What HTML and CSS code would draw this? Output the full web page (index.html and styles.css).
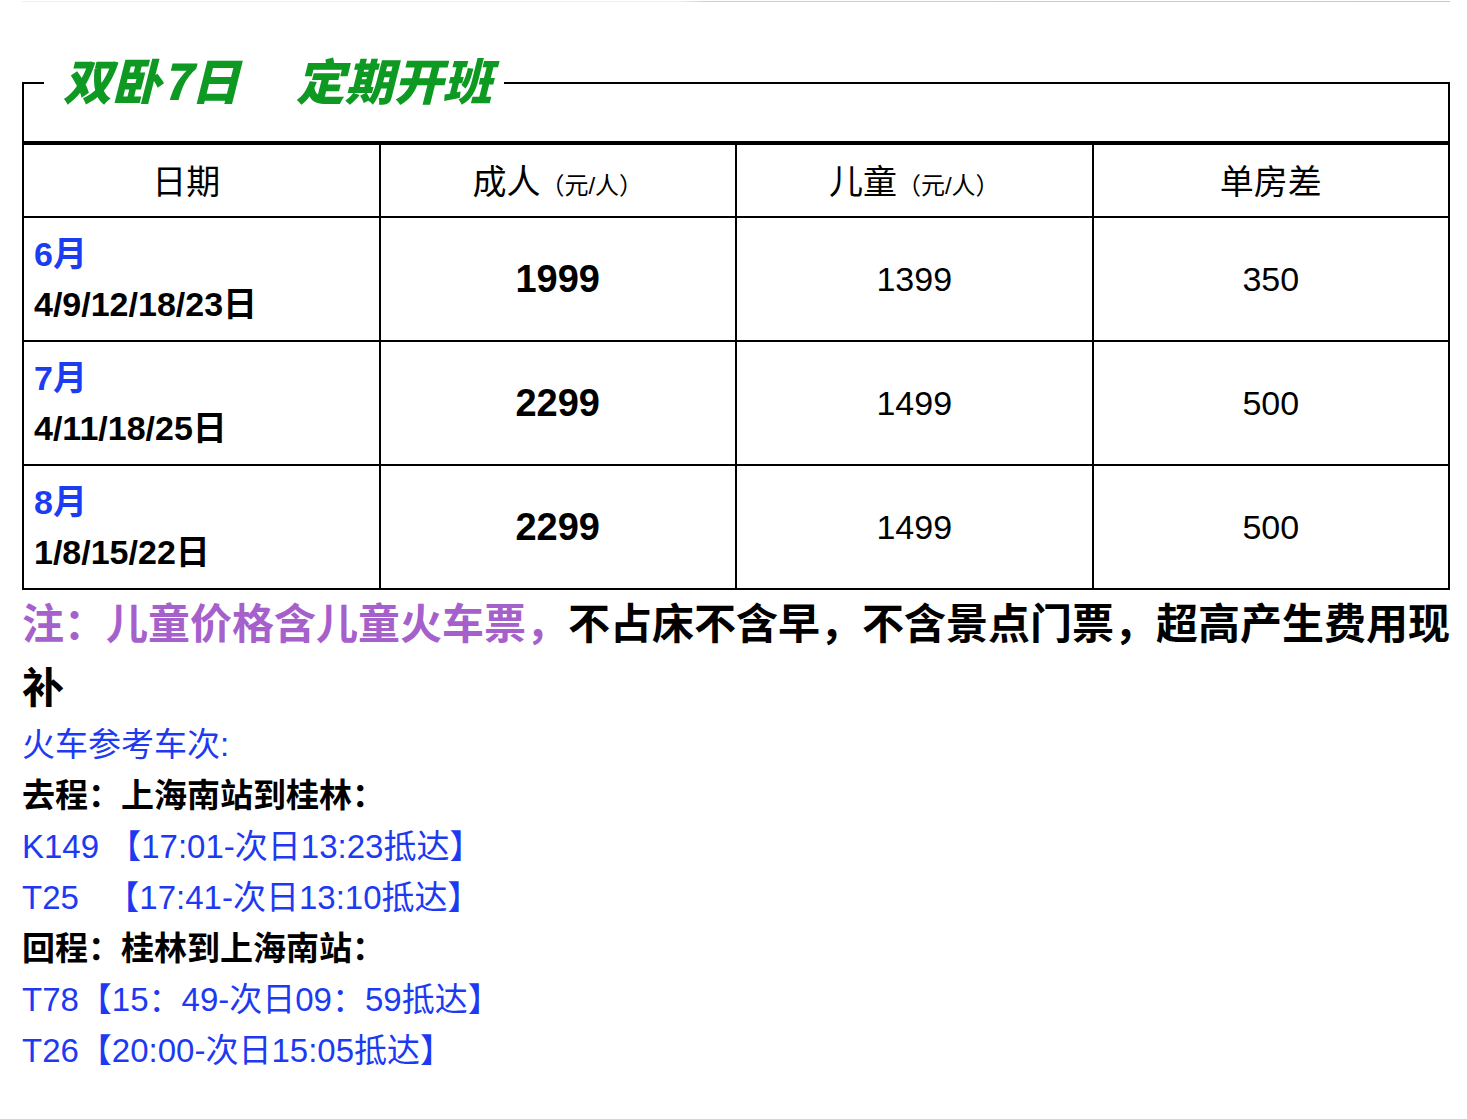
FILE: index.html
```html
<!DOCTYPE html>
<html lang="zh-CN">
<head>
<meta charset="utf-8">
<title>双卧7日 定期开班</title>
<link rel="stylesheet" href="styles.css">
</head>
<body>
<div class="page">
  <div class="topline"></div>
  <fieldset class="panel">
    <legend class="panel-title">双卧7日　<span class="panel-title-sub">定期开班</span></legend>
  </fieldset>
  <table class="price-table">
    <thead>
      <tr>
        <th class="th-date">日期</th>
        <th>成人<small>（元/人）</small></th>
        <th>儿童<small>（元/人）</small></th>
        <th>单房差</th>
      </tr>
    </thead>
    <tbody>
      <tr>
        <td class="date"><div class="month">6月</div><div class="days">4/9/12/18/23日</div></td>
        <td class="adult">1999</td>
        <td class="num">1399</td>
        <td class="num">350</td>
      </tr>
      <tr>
        <td class="date"><div class="month">7月</div><div class="days">4/11/18/25日</div></td>
        <td class="adult">2299</td>
        <td class="num">1499</td>
        <td class="num">500</td>
      </tr>
      <tr>
        <td class="date"><div class="month">8月</div><div class="days">1/8/15/22日</div></td>
        <td class="adult">2299</td>
        <td class="num">1499</td>
        <td class="num">500</td>
      </tr>
    </tbody>
  </table>
  <p class="note"><span class="note-hi">注：儿童价格含儿童火车票，</span>不占床不含早，不含景点门票，超高产生费用现补</p>
  <div class="trains">
    <div class="line blue">火车参考车次:</div>
    <div class="line bold">去程：上海南站到桂林：</div>
    <div class="line blue">K149 【17:01-次日13:23抵达】</div>
    <div class="line blue">T25&nbsp;&nbsp;&nbsp;【17:41-次日13:10抵达】</div>
    <div class="line bold">回程：桂林到上海南站：</div>
    <div class="line blue">T78【15：49-次日09：59抵达】</div>
    <div class="line blue">T26【20:00-次日15:05抵达】</div>
  </div>
</div>
</body>
</html>
```

FILE: styles.css
```css
html, body {
  margin: 0;
  padding: 0;
  background: #fff;
}
body {
  font-family: "Liberation Sans", "Noto Sans CJK SC", sans-serif;
  color: #000;
}
.page {
  margin-left: 22px;
  width: 1428px;
}
.topline {
  margin-top: 1px;
  height: 1px;
  background: linear-gradient(to right, #efefef 0%, #efefef 46%, #cdcdcd 48%, #c9c9c9 100%);
}
.panel {
  margin: 47px 0 0;
  padding: 0 0 24px;
  border: 2px solid #000;
  min-width: 0;
}
.panel-title {
  margin-left: 20px;
  padding: 0 12px 8px 19px;
  font-family: "Noto Sans CJK SC", "Liberation Sans", sans-serif;
  font-size: 49px;
  line-height: 60px;
  font-weight: 900;
  font-style: italic;
  color: #0e9a22;
}
.panel-title-sub {
  margin-left: 7px;
}
.price-table {
  width: 1428px;
  table-layout: fixed;
  border-spacing: 0;
  border-top: 2px solid #000;
  border-left: 2px solid #000;
}
.price-table th,
.price-table td {
  box-sizing: border-box;
  padding: 0;
  border-right: 2px solid #000;
  border-bottom: 2px solid #000;
  text-align: center;
  vertical-align: middle;
}
.price-table th {
  height: 73px;
  padding-bottom: 3px;
  font-size: 34px;
  font-weight: normal;
}
.price-table th small {
  font-size: 24px;
}
.price-table th.th-date {
  padding-right: 30px;
}
.price-table td {
  height: 124px;
}
.price-table td.date {
  text-align: left;
  padding-left: 10px;
  font-weight: bold;
  font-size: 34px;
}
.month,
.days {
  line-height: 50px;
}
.month {
  color: #1b3cf0;
}
.price-table td.adult {
  font-size: 38px;
  font-weight: bold;
}
.price-table td.num {
  font-size: 34px;
}
.note {
  margin: 1px -24px 0 0;
  padding-top: 2px;
  font-size: 42px;
  line-height: 64px;
  font-weight: bold;
}
.note-hi {
  color: #a660cc;
}
.trains {
  margin-top: -2px;
}
.line {
  font-size: 33px;
  line-height: 51px;
}
.blue {
  color: #1d3af2;
}
.bold {
  font-weight: bold;
}
```
